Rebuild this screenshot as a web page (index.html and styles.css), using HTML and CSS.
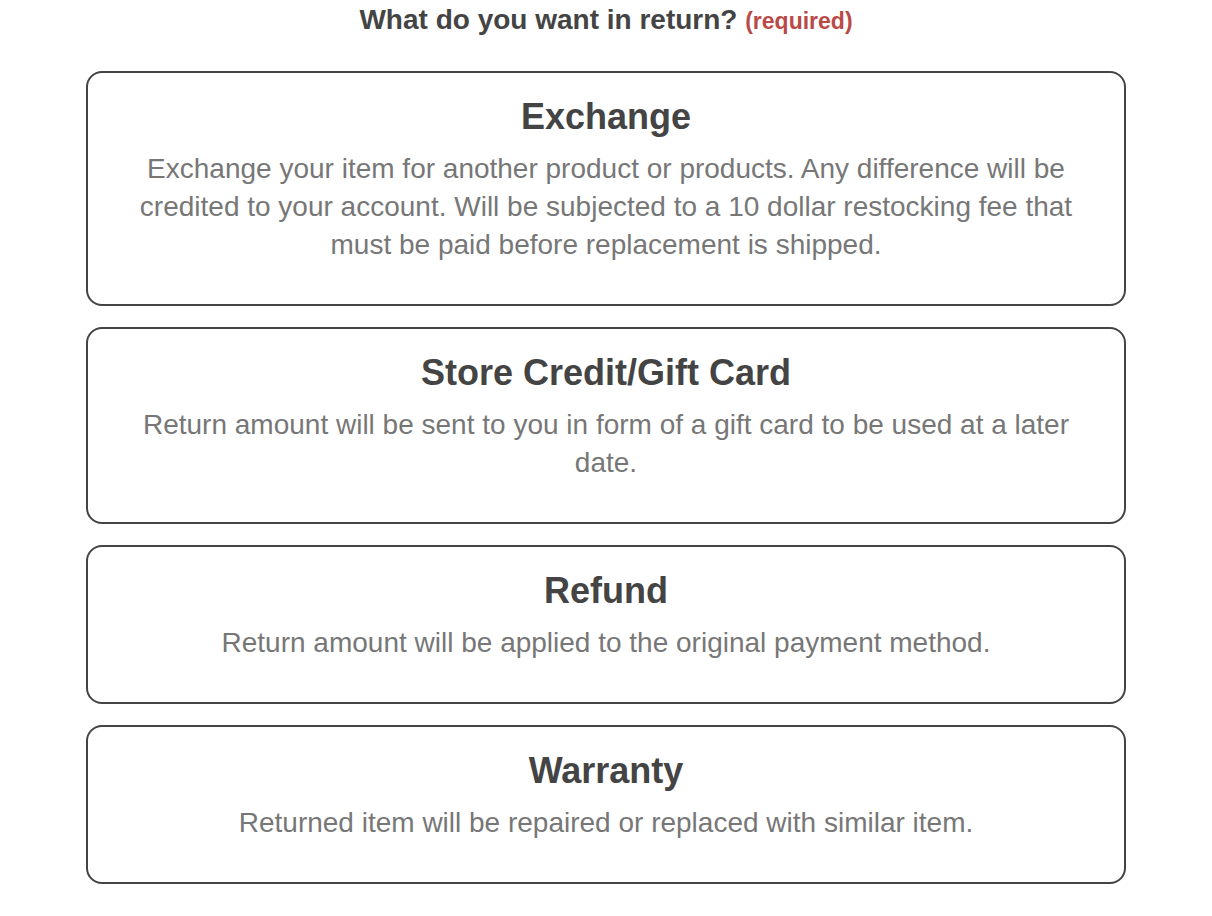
FILE: index.html
```html
<!DOCTYPE html>
<html lang="en">
<head>
<meta charset="utf-8">
<title>What do you want in return?</title>
<link rel="stylesheet" href="styles.css">
</head>
<body>
<div class="page">
  <h2 class="question">What do you want in return? <span class="required">(required)</span></h2>
  <div class="options">
    <div class="option">
      <h3 class="option-title">Exchange</h3>
      <p class="option-desc">Exchange your item for another product or products. Any difference will be credited to your account. Will be subjected to a 10 dollar restocking fee that must be paid before replacement is shipped.</p>
    </div>
    <div class="option">
      <h3 class="option-title">Store Credit/Gift Card</h3>
      <p class="option-desc">Return amount will be sent to you in form of a gift card to be used at a later date.</p>
    </div>
    <div class="option">
      <h3 class="option-title">Refund</h3>
      <p class="option-desc">Return amount will be applied to the original payment method.</p>
    </div>
    <div class="option">
      <h3 class="option-title">Warranty</h3>
      <p class="option-desc">Returned item will be repaired or replaced with similar item.</p>
    </div>
  </div>
</div>
</body>
</html>
```
FILE: styles.css
```css
html, body {
  margin: 0;
  padding: 0;
  background: #ffffff;
}
body {
  font-family: "Liberation Sans", Arial, Helvetica, sans-serif;
  color: #444444;
}
.page {
  width: 1040px;
  margin: 0 auto;
  padding-top: 3px;
}
.question {
  margin: 0 0 33px;
  font-size: 28px;
  line-height: 34px;
  font-weight: bold;
  text-align: center;
  color: #444444;
}
.required {
  font-size: 23px;
  color: #b94a48;
}
.options {
  display: flex;
  flex-direction: column;
  gap: 21px;
}
.option {
  border: 2px solid #444444;
  border-radius: 16px;
  padding: 22px 40px 40px;
  text-align: center;
}
.option-title {
  margin: 0 0 11px;
  font-size: 36px;
  line-height: 44px;
  font-weight: bold;
  color: #444444;
}
.option-desc {
  margin: 0;
  font-size: 28px;
  line-height: 38px;
  color: #777777;
}
```
